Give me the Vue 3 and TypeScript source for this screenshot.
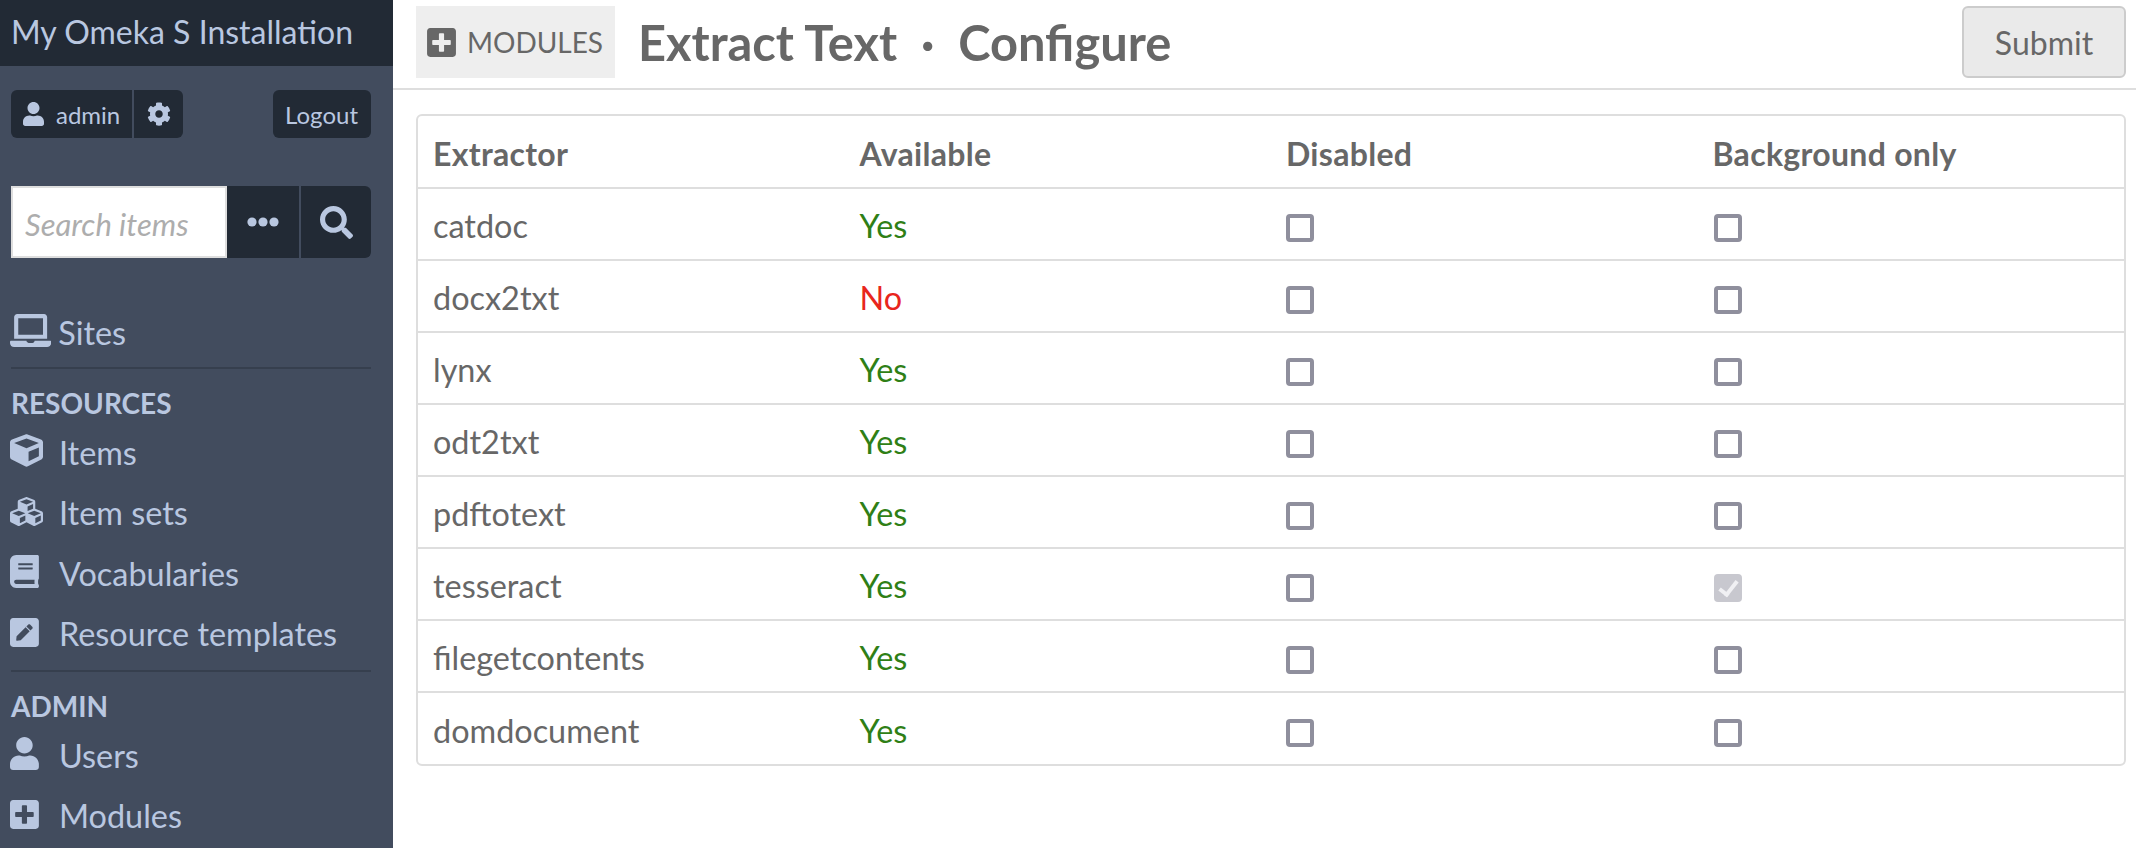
<script setup lang="ts">
interface Extractor {
  name: string
  available: boolean
  backgroundOnly?: boolean
}

interface NavItem {
  label: string
  icon: string
  viewBox: string
}

const icons = {
  user: 'M224 256c70.7 0 128-57.3 128-128S294.7 0 224 0 96 57.3 96 128s57.3 128 128 128zm89.6 32h-16.7c-22.2 10.2-46.9 16-72.9 16s-50.6-5.8-72.9-16h-16.7C60.2 288 0 348.2 0 422.4V464c0 26.5 21.5 48 48 48h352c26.5 0 48-21.5 48-48v-41.6c0-74.2-60.2-134.4-134.4-134.4z',
  cog: 'M487.4 315.7l-42.6-24.6c4.3-23.2 4.3-47 0-70.2l42.6-24.6c4.9-2.8 7.1-8.6 5.5-14-11.1-35.6-30-67.8-54.7-94.6-3.8-4.1-10-5.1-14.8-2.3L380.8 110c-17.9-15.4-38.5-27.3-60.8-35.1V25.8c0-5.6-3.9-10.5-9.4-11.7-36.7-8.2-74.3-7.8-109.2 0-5.5 1.2-9.4 6.1-9.4 11.7V75c-22.2 7.9-42.8 19.8-60.8 35.1L88.7 85.5c-4.9-2.8-11-1.9-14.8 2.3-24.7 26.7-43.6 58.9-54.7 94.6-1.7 5.4.6 11.2 5.5 14L67.3 221c-4.3 23.2-4.3 47 0 70.2l-42.6 24.6c-4.9 2.8-7.1 8.6-5.5 14 11.1 35.6 30 67.8 54.7 94.6 3.8 4.1 10 5.1 14.8 2.3l42.6-24.6c17.9 15.4 38.5 27.3 60.8 35.1v49.2c0 5.6 3.9 10.5 9.4 11.7 36.7 8.2 74.3 7.8 109.2 0 5.5-1.2 9.4-6.1 9.4-11.7v-49.2c22.2-7.9 42.8-19.8 60.8-35.1l42.6 24.6c4.9 2.8 11 1.9 14.8-2.3 24.7-26.7 43.6-58.9 54.7-94.6 1.5-5.5-.7-11.3-5.6-14.1zM256 336c-44.1 0-80-35.9-80-80s35.9-80 80-80 80 35.9 80 80-35.9 80-80 80z',
  search: 'M505 442.7L405.3 343c-4.5-4.5-10.6-7-17-7H372c27.6-35.3 44-79.7 44-128C416 93.1 322.9 0 208 0S0 93.1 0 208s93.1 208 208 208c48.3 0 92.7-16.4 128-44v16.3c0 6.4 2.5 12.5 7 17l99.7 99.7c9.4 9.4 24.6 9.4 33.9 0l28.3-28.3c9.4-9.4 9.4-24.6.1-34zM208 336c-70.7 0-128-57.2-128-128 0-70.7 57.2-128 128-128 70.7 0 128 57.2 128 128 0 70.7-57.2 128-128 128z',
  laptop: 'M624 416H381.54c-.74 19.81-14.71 32-32.74 32H288c-18.69 0-33.02-17.47-32.77-32H16c-8.8 0-16 7.2-16 16v16c0 35.2 28.8 64 64 64h512c35.2 0 64-28.8 64-64v-16c0-8.8-7.2-16-16-16zM576 48c0-26.4-21.6-48-48-48H112C85.6 0 64 21.6 64 48v336h512V48zm-64 272H128V64h384v256z',
  cube: 'M239.1 6.3l-208 78c-18.7 7-31.1 25-31.1 45v225.1c0 18.2 10.3 34.8 26.5 42.9l208 104c13.5 6.8 29.4 6.8 42.9 0l208-104c16.3-8.1 26.5-24.8 26.5-42.9V129.3c0-20-12.4-37.9-31.1-44.9l-208-78C262 2.2 250 2.2 239.1 6.3zM256 68.4l192 72v1.1l-192 78-192-78v-1.1l192-72zm32 356V275.5l160-65v133.9l-160 80z',
  cubes: 'M488.6 250.2L392 214V105.5c0-15-9.3-28.4-23.4-33.7l-100-37.5c-8.1-3.1-17.1-3.1-25.3 0l-100 37.5c-14.1 5.3-23.4 18.7-23.4 33.7V214l-96.6 36.2C9.3 255.5 0 268.9 0 283.9V394c0 13.6 7.7 26.1 19.9 32.2l100 50c10.1 5.1 22.1 5.1 32.2 0l103.9-52 103.9 52c10.1 5.1 22.1 5.1 32.2 0l100-50c12.2-6.1 19.9-18.6 19.9-32.2V283.9c0-15-9.3-28.4-23.4-33.7zM358 214.8l-85 31.9v-68.2l85-37v73.3zM154 104.1l102-38.2 102 38.2v.6l-102 41.4-102-41.4v-.6zm84 291.1l-85 42.5v-79.1l85-38.8v75.4zm0-112l-102 41.4-102-41.4v-.6l102-38.2 102 38.2v.6zm240 112l-85 42.5v-79.1l85-38.8v75.4zm0-112l-102 41.4-102-41.4v-.6l102-38.2 102 38.2v.6z',
  book: 'M448 360V24c0-13.3-10.7-24-24-24H96C43 0 0 43 0 96v320c0 53 43 96 96 96h328c13.3 0 24-10.7 24-24v-16c0-7.5-3.5-14.3-8.9-18.7-4.2-15.4-4.2-59.3 0-74.7 5.4-4.3 8.9-11.1 8.9-18.6zM128 134c0-3.3 2.7-6 6-6h212c3.3 0 6 2.7 6 6v20c0 3.3-2.7 6-6 6H134c-3.3 0-6-2.7-6-6v-20zm0 64c0-3.3 2.7-6 6-6h212c3.3 0 6 2.7 6 6v20c0 3.3-2.7 6-6 6H134c-3.3 0-6-2.7-6-6v-20zm253.4 250H96c-17.7 0-32-14.3-32-32 0-17.6 14.4-32 32-32h285.4c-1.9 17.1-1.9 46.9 0 64z',
  pen: 'M400 480H48c-26.5 0-48-21.5-48-48V80c0-26.5 21.5-48 48-48h352c26.5 0 48 21.5 48 48v352c0 26.5-21.5 48-48 48zM238.1 177.9L102.4 313.6l-6.3 57.1c-.8 7.6 5.6 14.1 13.3 13.3l57.1-6.3L302.2 242c2.3-2.3 2.3-6.1 0-8.5L246.7 178c-2.5-2.4-6.3-2.4-8.6-.1zM345 165.1L314.9 135c-9.4-9.4-24.6-9.4-33.9 0l-23.1 23.1c-2.3 2.3-2.3 6.1 0 8.5l55.5 55.5c2.3 2.3 6.1 2.3 8.5 0L345 199c9.3-9.3 9.3-24.5 0-33.9z',
  plus: 'M400 32H48C21.5 32 0 53.5 0 80v352c0 26.5 21.5 48 48 48h352c26.5 0 48-21.5 48-48V80c0-26.5-21.5-48-48-48zm-32 252c0 6.6-5.4 12-12 12h-92v92c0 6.6-5.4 12-12 12h-56c-6.6 0-12-5.4-12-12v-92H92c-6.6 0-12-5.4-12-12v-56c0-6.6 5.4-12 12-12h92v-92c0-6.6 5.4-12 12-12h56c6.6 0 12 5.4 12 12v92h92c6.6 0 12 5.4 12 12v56z'
}

const resources: NavItem[] = [
  { label: 'Items', icon: icons.cube, viewBox: '0 0 512 512' },
  { label: 'Item sets', icon: icons.cubes, viewBox: '0 0 512 512' },
  { label: 'Vocabularies', icon: icons.book, viewBox: '0 0 448 512' },
  { label: 'Resource templates', icon: icons.pen, viewBox: '0 0 448 512' }
]

const admin: NavItem[] = [
  { label: 'Users', icon: icons.user, viewBox: '0 0 448 512' },
  { label: 'Modules', icon: icons.plus, viewBox: '0 0 448 512' }
]

const extractors: Extractor[] = [
  { name: 'catdoc', available: true },
  { name: 'docx2txt', available: false },
  { name: 'lynx', available: true },
  { name: 'odt2txt', available: true },
  { name: 'pdftotext', available: true },
  { name: 'tesseract', available: true, backgroundOnly: true },
  { name: 'filegetcontents', available: true },
  { name: 'domdocument', available: true }
]
</script>

<template>
  <div class="layout">
    <aside class="sidebar">
      <div class="site-title">My Omeka S Installation</div>

      <div class="user-bar">
        <div class="user-group">
          <a class="user-link">
            <svg class="user-icon" viewBox="0 0 448 512"><path :d="icons.user" /></svg>
            admin
          </a>
          <a class="cog-link">
            <svg class="cog-icon" viewBox="0 0 512 512"><path :d="icons.cog" /></svg>
          </a>
        </div>
        <a class="logout">Logout</a>
      </div>

      <form class="search" @submit.prevent>
        <input class="search-input" type="text" placeholder="Search items" />
        <button class="search-btn more" type="button">
          <svg class="dots" viewBox="0 0 32 10"><circle cx="5" cy="5" r="4.6" /><circle cx="16" cy="5" r="4.6" /><circle cx="27" cy="5" r="4.6" /></svg>
        </button>
        <button class="search-btn go" type="button">
          <svg class="search-icon" viewBox="0 0 512 512"><path :d="icons.search" /></svg>
        </button>
      </form>

      <nav class="nav">
        <a class="nav-item sites">
          <svg class="nav-icon laptop" viewBox="0 0 640 512"><path :d="icons.laptop" /></svg>
          Sites
        </a>
        <div class="nav-section">
          <h4 class="nav-heading">Resources</h4>
          <a v-for="item in resources" :key="item.label" class="nav-item">
            <span class="icon-slot"><svg class="nav-icon" :viewBox="item.viewBox"><path :d="item.icon" /></svg></span>
            {{ item.label }}
          </a>
        </div>
        <div class="nav-section">
          <h4 class="nav-heading">Admin</h4>
          <a v-for="item in admin" :key="item.label" class="nav-item">
            <span class="icon-slot"><svg class="nav-icon" :viewBox="item.viewBox"><path :d="item.icon" /></svg></span>
            {{ item.label }}
          </a>
        </div>
      </nav>
    </aside>

    <main class="content">
      <header class="page-header">
        <a class="breadcrumb">
          <svg class="crumb-icon" viewBox="0 0 448 512"><path :d="icons.plus" /></svg>
          MODULES
        </a>
        <h1 class="title">Extract Text <span class="dot">·</span> Configure</h1>
        <button class="submit" type="button">Submit</button>
      </header>

      <div class="table-wrap">
        <table class="table">
          <thead>
            <tr>
              <th>Extractor</th>
              <th>Available</th>
              <th>Disabled</th>
              <th>Background only</th>
            </tr>
          </thead>
          <tbody>
            <tr v-for="row in extractors" :key="row.name">
              <td>{{ row.name }}</td>
              <td :class="row.available ? 'yes' : 'no'">{{ row.available ? 'Yes' : 'No' }}</td>
              <td><input class="check" type="checkbox" /></td>
              <td>
                <input v-if="row.backgroundOnly" class="check" type="checkbox" checked disabled />
                <input v-else class="check" type="checkbox" />
              </td>
            </tr>
          </tbody>
        </table>
      </div>
    </main>
  </div>
</template>

<style>
html,
body {
  margin: 0;
  background: #fff;
  overflow: hidden;
}
</style>

<style scoped>
.layout {
  display: flex;
  width: 2136px;
  height: 848px;
  overflow: hidden;
  font-family: Lato, "Liberation Sans", sans-serif;
  color: #676767;
}

/* Sidebar */
.sidebar {
  flex: 0 0 393px;
  background: #424c5e;
  color: #b9c7e0;
}

.site-title {
  height: 66px;
  padding-left: 11px;
  background: #222a35;
  font-size: 32px;
  line-height: 63px;
  white-space: nowrap;
}

.user-bar {
  display: flex;
  justify-content: space-between;
  margin: 24px 22px 0 11px;
  height: 48px;
}

.user-group {
  display: flex;
  gap: 2px;
}

.user-link,
.cog-link,
.logout {
  display: flex;
  align-items: center;
  background: #222a35;
  font-size: 24px;
}

.user-link {
  gap: 12px;
  padding: 0 12px;
  border-radius: 6px 0 0 6px;
}

.user-icon {
  width: 21px;
  height: 24px;
  fill: currentColor;
}

.cog-link {
  padding: 0 12px 0 13px;
  border-radius: 0 6px 6px 0;
}

.cog-icon {
  width: 24px;
  height: 24px;
  fill: currentColor;
}

.logout {
  padding: 0 13px 0 12px;
  border-radius: 6px;
}

.search {
  display: flex;
  margin: 48px 22px 0 11px;
  height: 72px;
}

.search-input {
  box-sizing: border-box;
  width: 216px;
  height: 72px;
  padding: 3px 12px 0;
  border: 2px solid #dedede;
  outline: none;
  background: #fff;
  font: inherit;
  font-size: 31px;
}

.search-input::placeholder {
  color: #adadad;
  font-style: italic;
  opacity: 1;
}

.search-btn {
  display: flex;
  align-items: center;
  justify-content: center;
  height: 72px;
  padding: 0;
  border: 0;
  background: #222a35;
  color: #b9c7e0;
}

.more {
  width: 72px;
  margin-right: 2px;
}

.go {
  width: 70px;
  border-radius: 0 6px 6px 0;
}

.dots {
  width: 32px;
  height: 10px;
  fill: currentColor;
}

.search-icon {
  width: 33px;
  height: 33px;
  fill: currentColor;
}

.nav {
  margin: 39px 22px 0 11px;
}

.nav-item {
  display: flex;
  align-items: center;
  height: 60.5px;
  font-size: 32.4px;
  white-space: nowrap;
}

.sites {
  box-sizing: border-box;
  height: 72px;
  gap: 7px;
  border-bottom: 2px solid #363f4e;
}

.nav-section {
  padding-bottom: 6px;
  border-bottom: 2px solid #363f4e;
}

.nav-section:last-child {
  border-bottom: 0;
}

.nav-heading {
  margin: 18px 0 3px;
  font-size: 28px;
  font-weight: 700;
  line-height: 32px;
  text-transform: uppercase;
}

.icon-slot {
  flex: 0 0 49px;
  display: flex;
  margin-left: -1px;
}

.nav-icon {
  flex: none;
  width: auto;
  height: 33px;
  margin-top: -3px;
  fill: currentColor;
}

.laptop {
  margin-left: -1px;
}

/* Main */
.content {
  flex: 1;
  min-width: 0;
}

.page-header {
  display: flex;
  align-items: flex-start;
  box-sizing: border-box;
  height: 90px;
  padding: 6px 10px 0 23px;
  border-bottom: 2px solid #dedede;
}

.breadcrumb {
  display: flex;
  align-items: center;
  gap: 11px;
  box-sizing: border-box;
  width: 199px;
  height: 72px;
  padding-left: 11px;
  background: #eeeeee;
  font-size: 28px;
}

.crumb-icon {
  flex: none;
  width: 29px;
  height: 33px;
  fill: currentColor;
}

.title {
  flex: 1;
  margin: 0 0 0 23px;
  font-size: 48.8px;
  font-weight: 700;
  line-height: 73px;
  white-space: pre;
}

.dot {
  margin: 0 12px;
}

.submit {
  box-sizing: border-box;
  width: 164px;
  height: 72px;
  border: 2px solid #cccccc;
  border-radius: 6px;
  background: #eaeaea;
  color: #676767;
  font: inherit;
  font-size: 32px;
}

.table-wrap {
  margin: 24px 10px 0 23px;
  border: 2px solid #dedede;
  border-radius: 6px;
  overflow: hidden;
}

.table {
  width: 100%;
  border-collapse: collapse;
  table-layout: fixed;
}

th,
td {
  box-sizing: border-box;
  height: 72px;
  padding: 4px 15px 0;
  border-bottom: 2px solid #dedede;
  font-size: 32.4px;
  line-height: 36px;
  text-align: left;
}

tbody tr:last-child td {
  border-bottom: 0;
}

th {
  font-weight: 700;
  font-size: 32px;
  letter-spacing: 0.3px;
}

.yes {
  color: #2f7f16;
}

.no {
  color: #e8261c;
}

.check {
  appearance: none;
  display: block;
  box-sizing: border-box;
  width: 28px;
  height: 28px;
  margin: 4px 0 0;
  border: 4px solid #8f8f9d;
  border-radius: 4px;
  background: #fff;
}

td:last-child .check {
  margin-left: 1px;
}

.check:disabled {
  position: relative;
  border: 0;
  background: #c8c8cf;
}

.check:disabled::after {
  content: "";
  position: absolute;
  left: 9px;
  top: 3px;
  width: 7px;
  height: 15px;
  border: solid #f0f0f3;
  border-width: 0 4px 4px 0;
  transform: rotate(38deg);
}
</style>
